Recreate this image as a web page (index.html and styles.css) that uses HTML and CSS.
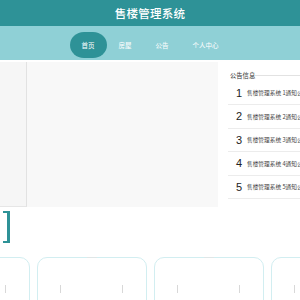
FILE: index.html
```html
<!DOCTYPE html>
<html lang="zh">
<head>
    <meta charset="UTF-8">
    <meta name="viewport" content="width=device-width, initial-scale=1.0">
    <title>售楼管理系统</title>
    <link rel="stylesheet" href="styles.css">
</head>
<body>
    <header class="topbar">
        <h1>售楼管理系统</h1>
    </header>
    <nav class="menu">
        <ul>
            <li class="is-active"><a href="#">首页</a></li>
            <li><a href="#">房屋</a></li>
            <li><a href="#">公告</a></li>
            <li><a href="#">个人中心</a></li>
        </ul>
    </nav>
    <div class="main">
        <div class="side"></div>
        <div class="banner"></div>
        <div class="notice">
            <div class="notice-title"><span>公告信息</span></div>
            <ul>
                <li><span class="num">1</span><span class="txt">售楼管理系统 1通知公告</span></li>
                <li><span class="num">2</span><span class="txt">售楼管理系统 2通知公告</span></li>
                <li><span class="num">3</span><span class="txt">售楼管理系统 3通知公告</span></li>
                <li><span class="num">4</span><span class="txt">售楼管理系统 4通知公告</span></li>
                <li><span class="num">5</span><span class="txt">售楼管理系统 5通知公告</span></li>
            </ul>
        </div>
    </div>
    <div class="section-head">
        <span class="bracket"></span>
    </div>
    <div class="cards">
        <div class="card"><i class="tick"></i><i class="tick"></i></div>
        <div class="card"><b class="top-mark"></b><i class="tick"></i><i class="tick"></i></div>
        <div class="card"><b class="top-mark"></b><i class="tick"></i><i class="tick"></i></div>
        <div class="card"><b class="top-mark"></b><i class="tick"></i><i class="tick"></i></div>
    </div>
</body>
</html>
```
FILE: styles.css
```css
* {
    margin: 0;
    padding: 0;
    box-sizing: border-box;
}
html, body {
    width: 300px;
    height: 300px;
    overflow: hidden;
}
body {
    font-family: "Noto Sans CJK SC", "Liberation Sans", sans-serif;
    background-color: #fff;
    color: #333;
}
.topbar {
    height: 26px;
    background-color: #2e9297;
    display: flex;
    align-items: center;
    justify-content: center;
}
.topbar h1 {
    font-size: 11.5px;
    font-weight: 500;
    color: #fff;
    letter-spacing: 0.02em;
}
.menu {
    height: 34px;
    background-color: #8fd0d6;
}
.menu ul {
    height: 100%;
    display: flex;
    justify-content: center;
    padding-top: 6px;
    padding-bottom: 2px;
    list-style: none;
}
.menu li {
    display: flex;
    align-items: center;
    padding: 0 12px;
    border-radius: 14px / 13px;
}
.menu li.is-active {
    background-color: #2e9297;
}
.menu a {
    color: #fff;
    text-decoration: none;
    font-size: 6.5px;
}
.main {
    display: flex;
    margin-top: 2px;
    height: 145px;
}
.side {
    flex-shrink: 0;
    width: 27px;
    background-color: #f6f6f6;
    border-right: 1px solid #e2e2e2;
    border-bottom: 1px solid #e6e6e6;
}
.banner {
    flex-shrink: 0;
    width: 191px;
    background-color: #f8f8f8;
}
.notice {
    margin-left: 10px;
    width: 90px;
    flex-shrink: 0;
    padding-top: 8.5px;
}
.notice-title {
    display: flex;
    align-items: center;
    height: 10px;
    padding-left: 2px;
    font-size: 6.3px;
    color: #333;
}
.notice-title::after {
    content: "";
    flex: 1;
    height: 1px;
    background-color: #e2e2e2;
}
.notice ul {
    list-style: none;
    margin-top: 1px;
}
.notice li {
    display: flex;
    align-items: center;
    height: 23.5px;
    padding-left: 8px;
    border-bottom: 1px solid #ececec;
    white-space: nowrap;
}
.num {
    width: 11px;
    font-size: 11px;
    font-family: "Liberation Sans", sans-serif;
    color: #222;
}
.txt {
    font-size: 5.7px;
    color: #444;
}
.section-head {
    height: 32px;
    margin-top: 4px;
    padding-left: 3px;
}
.bracket {
    display: block;
    width: 7px;
    height: 32px;
    border: 2.5px solid #2e9297;
    border-left: none;
    border-right-width: 3px;
}
.cards {
    display: flex;
    gap: 7px;
    margin-top: 14px;
    margin-left: -80px;
}
.card {
    position: relative;
    flex-shrink: 0;
    width: 110px;
    height: 60px;
    border: 1.5px solid #d2eef1;
    border-radius: 10px;
}
.tick {
    position: absolute;
    top: 27px;
    width: 1px;
    height: 8px;
    background-color: #d8d8d8;
}
.tick:first-of-type {
    left: 22px;
}
.tick:last-of-type {
    right: 23px;
}
.top-mark {
    position: absolute;
    top: -1.5px;
    left: 50%;
    width: 10px;
    height: 1.5px;
    margin-left: -5px;
    background-color: #dfe6e7;
}
```
